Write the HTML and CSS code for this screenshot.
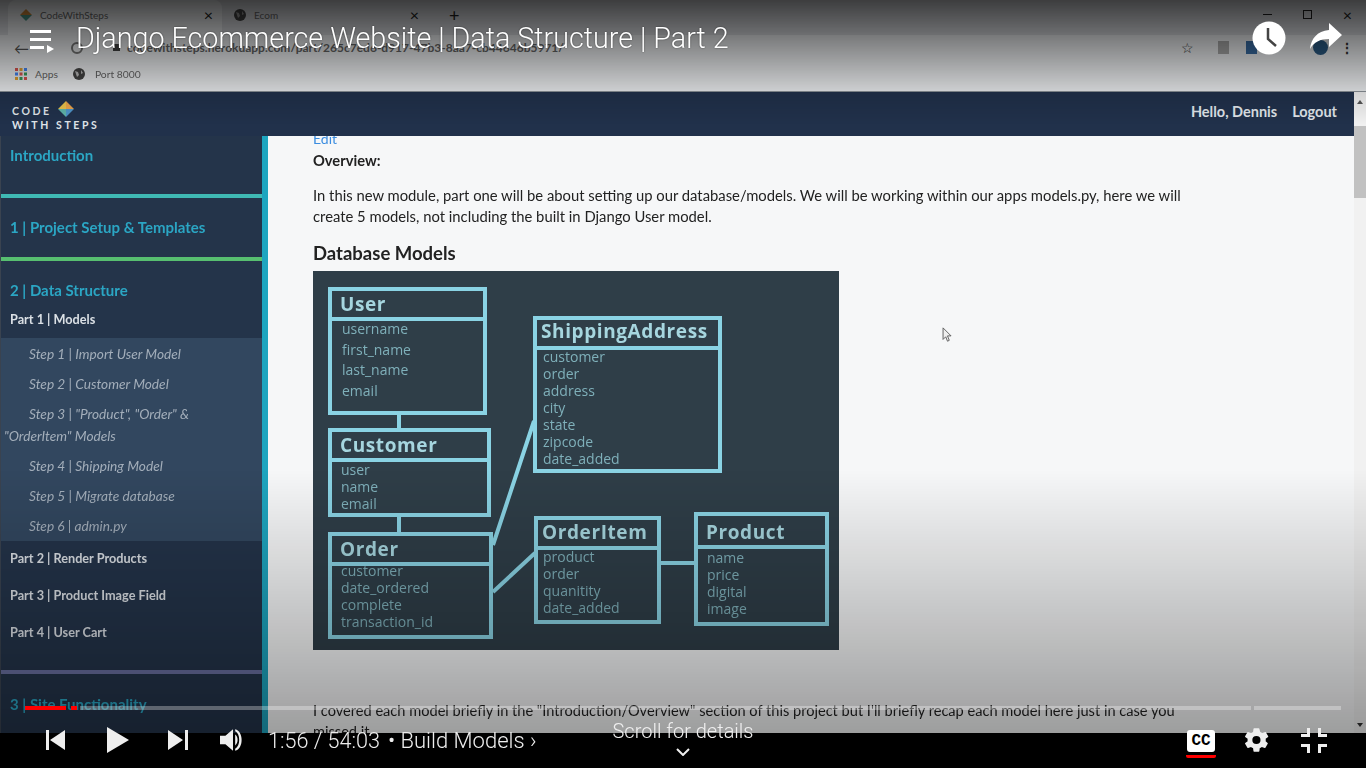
FILE: index.html
```html
<!DOCTYPE html>
<html lang="en">
<head>
	<meta charset="UTF-8">
	<title>Django Ecommerce Website | Data Structure | Part 2</title>
	<link rel="stylesheet" href="styles.css">
</head>
<body>
	<div id="player">
		<div id="frame">
			<div class="chrome">
				<div class="tabstrip">
					<div class="tab tab-active">
						<svg class="tab-icon" viewBox="0 0 12 12"><path d="M6 0L12 6H0Z" fill="#d08a3a"/><path d="M6 12L12 6H0Z" fill="#4c9a8a"/></svg>
						<span class="tab-name">CodeWithSteps</span>
						<span class="tab-x">×</span>
					</div>
					<div class="tab">
						<svg class="tab-icon" viewBox="0 0 12 12"><circle cx="6" cy="6" r="6" fill="#444"/><path d="M2 3l3 1 1 3-2 2zM8 2l2 3-2 1z" fill="#999"/></svg>
						<span class="tab-name">Ecom</span>
						<span class="tab-x">×</span>
					</div>
					<span class="tab-new">+</span>
					<div class="win-btns">
						<span class="win-min"></span>
						<span class="win-max"></span>
						<span class="win-close">×</span>
					</div>
				</div>
				<div class="toolbar">
					<span class="nav-arrow">←</span>
					<span class="nav-reload"></span>
					<span class="nav-lock"></span>
					<span class="url">codewithsteps.herokuapp.com/part/265c7ed6-d917-47b3-8aa7-cb44646b5971/</span>
					<span class="tool-star">☆</span>
					<span class="tool-ext"></span>
					<span class="tool-ext tool-blue"></span>
					<span class="tool-avatar"></span>
					<span class="tool-dots">⋮</span>
				</div>
				<div class="bookmarks">
					<svg class="apps-icon" viewBox="0 0 12 12">
						<path d="M0 0h3v3H0z" fill="#d9534f"/><path d="M4.500 0h3v3h-3z" fill="#e0a030"/><path d="M9 0h3v3H9z" fill="#4285f4"/>
						<path d="M0 4.500h3v3H0z" fill="#4285f4"/><path d="M4.500 4.500h3v3h-3z" fill="#d9534f"/><path d="M9 4.500h3v3H9z" fill="#3a9a5a"/>
						<path d="M0 9h3v3H0z" fill="#e0a030"/><path d="M4.500 9h3v3h-3z" fill="#3a9a5a"/><path d="M9 9h3v3H9z" fill="#d9534f"/>
					</svg>
					<span class="bm-text">Apps</span>
					<svg class="globe-icon" viewBox="0 0 12 12"><circle cx="6" cy="6" r="6" fill="#444"/><path d="M2 3l3 1 1 3-2 2zM8 2l2 3-2 1z" fill="#bbb"/></svg>
					<span class="bm-text">Port 8000</span>
				</div>
			</div>
			<div class="site">
				<div class="navbar">
					<div class="logo">
						<div class="logo-row">CODE
							<svg class="logo-gem" viewBox="0 0 16 16"><path d="M8 0L16 8H8Z" fill="#e9a24b"/><path d="M8 0L0 8H8Z" fill="#e9c04b"/><path d="M0 8L8 16V8Z" fill="#5fb3a8"/><path d="M16 8L8 16V8Z" fill="#4e94c8"/></svg>
						</div>
						<div>WITH STEPS</div>
					</div>
					<div class="nav-links"><span>Hello, Dennis</span><span>Logout</span></div>
				</div>
				<div class="site-body">
					<div class="sidebar">
						<div class="side-head side-intro">Introduction</div>
						<div class="side-rule rule-teal"></div>
						<div class="side-head side-one">1 | Project Setup &amp; Templates</div>
						<div class="side-rule rule-green"></div>
						<div class="side-head side-two">2 | Data Structure</div>
						<div class="side-part side-part-first">Part 1 | Models</div>
						<ul class="steps">
							<li>Step 1 | Import User Model</li>
							<li>Step 2 | Customer Model</li>
							<li>Step 3 | "Product", "Order" &amp;<br>"OrderItem" Models</li>
							<li>Step 4 | Shipping Model</li>
							<li>Step 5 | Migrate database</li>
							<li>Step 6 | admin.py</li>
						</ul>
						<div class="side-part">Part 2 | Render Products</div>
						<div class="side-part">Part 3 | Product Image Field</div>
						<div class="side-part">Part 4 | User Cart</div>
						<div class="side-rule rule-purple"></div>
						<div class="side-head side-three">3 | Site Functionality</div>
					</div>
					<div class="main">
						<a class="edit-link">Edit</a>
						<p class="overview">Overview:</p>
						<p class="intro">In this new module, part one will be about setting up our database/models. We will be working within our apps models.py, here we will create 5 models, not including the built in Django User model.</p>
						<h3 class="main-title">Database Models</h3>
						<div class="diagram">
							<svg class="links" viewBox="0 0 526 379">
								<path d="M86 144V158M86 246V263M180 274L221 150M180 321L222 282M346 292H382"/>
							</svg>
							<div class="node node-user">
								<div class="node-name">User</div>
								<div class="fields">username<br>first_name<br>last_name<br>email</div>
							</div>
							<div class="node node-customer">
								<div class="node-name">Customer</div>
								<div class="fields">user<br>name<br>email</div>
							</div>
							<div class="node node-order">
								<div class="node-name">Order</div>
								<div class="fields">customer<br>date_ordered<br>complete<br>transaction_id</div>
							</div>
							<div class="node node-shipping">
								<div class="node-name">ShippingAddress</div>
								<div class="fields">customer<br>order<br>address<br>city<br>state<br>zipcode<br>date_added</div>
							</div>
							<div class="node node-item">
								<div class="node-name">OrderItem</div>
								<div class="fields">product<br>order<br>quanitity<br>date_added</div>
							</div>
							<div class="node node-product">
								<div class="node-name">Product</div>
								<div class="fields">name<br>price<br>digital<br>image</div>
							</div>
						</div>
						<p class="recap">I covered each model briefly in the "Introduction/Overview" section of this project but I'll briefly recap each model here just in case you missed it.</p>
						<svg class="cursor" viewBox="0 0 12 18"><path d="M1 1V14L4 11L6 16L8 15L6 10H10Z" fill="#eee" stroke="#555"/></svg>
					</div>
					<div class="scrollbar">
						<span class="scroll-up"></span>
						<span class="scroll-thumb"></span>
						<span class="scroll-down"></span>
					</div>
				</div>
			</div>
		</div>

		<div id="shade-top"></div>
		<div id="shade-bottom"></div>

		<div id="topbar">
			<svg class="playlist-icon" viewBox="0 0 24 24"><path d="M0 1H21V4H0ZM0 9H21V12H0ZM0 17H14V20H0ZM17 16L24 20L17 24Z" fill="#fff"/></svg>
			<div class="video-title">Django Ecommerce Website | Data Structure | Part 2</div>
			<svg class="clock-icon" viewBox="0 0 34 34"><circle cx="17" cy="17" r="16.500" fill="#fff"/><path d="M16 7V18L24 25" fill="none" stroke="#444" stroke-width="2.500"/></svg>
			<svg class="share-icon" viewBox="0 0 32 30"><path d="M19 0L32 12L19 24V16C10 16 4 19 0 26C1 16 7 8 19 7Z" fill="#fff"/></svg>
		</div>

		<div id="progress">
			<span class="seg-played"></span>
			<span class="seg-played seg-short"></span>
			<span class="seg-rest"></span>
			<span class="seg-end"></span>
		</div>

		<div id="controls">
			<svg class="btn-prev" viewBox="0 0 20 22"><path d="M0 1H3V21H0ZM19 1V21L4 11Z" fill="#eee"/></svg>
			<svg class="btn-play" viewBox="0 0 22 26"><path d="M0 0L22 13L0 26Z" fill="#eee"/></svg>
			<svg class="btn-next" viewBox="0 0 20 22"><path d="M0 1L15 11L0 21ZM17 1H20V21H17Z" fill="#eee"/></svg>
			<svg class="btn-volume" viewBox="0 0 24 24"><path d="M0 8H5L12 2V22L5 16H0Z" fill="#eee"/><path d="M14 7C17 9 17 15 14 17ZM14 2C22 4 22 20 14 22V20C19 18 19 6 14 4Z" fill="#eee"/></svg>
			<div class="time">1:56 / 54:03</div>
			<div class="chapter">• Build Models ›</div>
			<div class="scroll-hint">
				<span>Scroll for details</span>
				<svg class="chev" viewBox="0 0 14 8"><path d="M1 1L7 7L13 1" fill="none" stroke="#eee" stroke-width="2"/></svg>
			</div>
			<div class="cc"><span class="cc-box">CC</span></div>
			<svg class="btn-gear" viewBox="0 0 24 24"><path fill-rule="evenodd" fill="#eee" d="M19.400 13c.1-.3.1-.7.1-1s0-.7-.1-1l2.100-1.600c.2-.2.2-.4.1-.6l-2-3.500c-.1-.2-.4-.3-.6-.2l-2.500 1c-.5-.4-1.100-.7-1.700-1L14 2.400C14 2.200 13.800 2 13.500 2h-4c-.2 0-.4.200-.5.400l-.4 2.700c-.6.200-1.100.6-1.700 1l-2.500-1c-.2-.1-.5 0-.6.200l-2 3.500c-.1.200-.1.500.1.600L4 11c0 .3-.1.700-.1 1s0 .7.1 1l-2.100 1.600c-.2.200-.2.400-.1.600l2 3.500c.1.200.4.300.6.200l2.500-1c.5.400 1.100.7 1.700 1l.4 2.700c0 .2.200.4.500.4h4c.2 0 .5-.2.500-.4l.4-2.700c.6-.2 1.100-.6 1.700-1l2.500 1c.2.100.5 0 .6-.2l2-3.500c.1-.2.100-.5-.1-.6ZM11.500 15.500a3.500 3.500 0 1 1 0-7 3.500 3.500 0 0 1 0 7Z"/></svg>
			<svg class="btn-exit" viewBox="0 0 26 25"><path d="M6 0H9V9H0V6H6ZM17 0H20V6H26V9H17ZM0 16H9V25H6V19H0ZM17 16H26V19H20V25H17Z" fill="#eee"/></svg>
		</div>
	</div>
</body>
</html>
```

FILE: styles.css
```css
*{
	margin: 0;
	padding: 0;
	box-sizing: border-box;
}
ul, ol{
	list-style: none;
}
body{
	background: #000;
	overflow: hidden;
}
#player{
	width: 1366px;
	height: 768px;
	position: relative;
	background: #000;
	overflow: hidden;
	font-family: "Lato", "Liberation Sans", sans-serif;
}
#frame{
	height: 733px;
	overflow: hidden;
	display: flex;
	flex-direction: column;
	filter: blur(.5px);
}

/* browser chrome */
.chrome{
	height: 92px;
	flex: none;
	background: #eef0f2;
	border-bottom: 1px solid #8d9499;
	color: #333;
}
.tabstrip{
	height: 35px;
	display: flex;
	align-items: center;
	background: #dadce0;
	padding-left: 8px;
}
.tab{
	width: 206px;
	height: 35px;
	padding: 0 9px 6px 12px;
	display: flex;
	align-items: center;
	gap: 8px;
	font-size: 10px;
	color: #666;
}
.tab-active{
	background: #eef0f2;
	border-radius: 8px 8px 0 0;
	width: 214px;
}
.tab-icon{
	width: 12px;
	height: 12px;
}
.tab-name{
	flex: 1;
}
.tab-x{
	font-size: 16px;
	color: #222;
}
.tab-new{
	margin-left: 21px;
	padding-bottom: 6px;
	font-size: 18px;
	color: #222;
}
.win-btns{
	margin-left: auto;
	display: flex;
	align-items: center;
	gap: 31px;
	padding: 0 14px 7px 0;
	color: #222;
}
.win-min{
	width: 9px;
	height: 1px;
	background: #222;
}
.win-max{
	width: 9px;
	height: 9px;
	border: 1px solid #222;
}
.win-close{
	font-size: 16px;
}
.toolbar{
	height: 25px;
	display: flex;
	align-items: center;
	padding: 0 12px 0 14px;
}
.nav-arrow{
	font-size: 15px;
	width: 57px;
	color: #555;
}
.nav-reload{
	width: 12px;
	height: 12px;
	border: 2px solid #777;
	border-radius: 50%;
}
.nav-lock{
	width: 7px;
	height: 7px;
	margin-left: 30px;
	background: #444;
}
.url{
	flex: 1;
	font-size: 12px;
	font-weight: 700;
	color: #666;
	margin-left: 7px;
}
.tool-star{
	font-size: 14px;
	margin-right: 24px;
}
.tool-ext{
	width: 11px;
	height: 13px;
	background: #aaa;
	margin-right: 17px;
}
.tool-blue{
	background: #3b6ea5;
	margin-right: 56px;
}
.tool-avatar{
	width: 15px;
	height: 15px;
	border-radius: 50%;
	background: #2c5c86;
	margin-right: 12px;
}
.tool-dots{
	font-size: 14px;
	font-weight: 700;
}
.bookmarks{
	height: 31px;
	display: flex;
	align-items: center;
	padding-left: 15px;
	padding-bottom: 4px;
	font-size: 10.300px;
	color: #666;
}
.apps-icon{
	width: 12px;
	height: 12px;
	margin-right: 8px;
}
.globe-icon{
	width: 12px;
	height: 12px;
	margin: 0 10px 0 15px;
}

/* site */
.site{
	flex: 1;
	display: flex;
	flex-direction: column;
	min-height: 0;
}
.navbar{
	height: 44px;
	flex: none;
	background: #21314b;
	color: #dfe3e8;
	display: flex;
	align-items: center;
	justify-content: space-between;
	padding: 0 17px 0 12px;
	margin-right: 12px;
	position: relative;
}
.logo{
	font-size: 10.500px;
	font-weight: 700;
	letter-spacing: 2.600px;
	line-height: 14px;
	padding-top: 8px;
}
.logo-row{
	display: flex;
	align-items: center;
	gap: 6px;
}
.logo-gem{
	width: 16px;
	height: 16px;
	margin-top: -4px;
}
.nav-links{
	display: flex;
	gap: 15px;
	font-size: 14.500px;
	font-weight: 700;
	padding-bottom: 6px;
}
.site-body{
	flex: 1;
	display: flex;
	min-height: 0;
	background: #f6f7f8;
}

/* sidebar */
.sidebar{
	width: 268px;
	flex: none;
	background: #24344a;
	border-right: 6px solid #1ea5bf;
	border-left: 1px solid #3a4350;
	overflow: hidden;
	margin-right: 45px;
}
.side-head{
	color: #2ba6c4;
	font-size: 15px;
	font-weight: 700;
	padding-left: 9px;
	line-height: 20px;
}
.side-intro{
	padding-top: 9px;
	height: 58px;
}
.side-one{
	padding-top: 19px;
	height: 59px;
}
.side-two{
	padding-top: 19px;
	height: 42px;
}
.side-three{
	padding-top: 20px;
}
.side-rule{
	height: 4px;
}
.rule-teal{
	background: #3fb9b4;
}
.rule-green{
	background: #57bf70;
}
.rule-purple{
	background: #686f9f;
	margin-top: 18px;
}
.side-part{
	color: #dbe0e5;
	font-size: 12.700px;
	font-weight: 700;
	padding-left: 9px;
	height: 37px;
	line-height: 35px;
}
.side-part-first{
	height: 32px;
	line-height: 27px;
	margin-top: 3px;
}
.steps{
	background: #32475f;
	height: 203px;
	padding-top: 1px;
	color: #a3aeba;
	font-size: 13.700px;
	font-style: italic;
	line-height: 22px;
}
.steps li{
	padding: 4px 0 4px 3px;
	text-indent: 25px;
}

/* main content */
.main{
	width: 1041px;
	flex: none;
	color: #222;
	font-size: 14.700px;
	position: relative;
	overflow: hidden;
}
.edit-link{
	display: block;
	color: #3b8de0;
	font-size: 14px;
	line-height: 14px;
	margin-top: -4px;
}
.overview{
	font-weight: 700;
	line-height: 18px;
	margin-top: 5px;
}
.intro{
	width: 880px;
	font-size: 14.800px;
	line-height: 21px;
	margin-top: 16px;
}
.main-title{
	font-size: 18.500px;
	line-height: 22px;
	margin-top: 15px;
}
.diagram{
	width: 526px;
	height: 379px;
	margin-top: 7px;
	background: #2f3e48;
	position: relative;
}
.links{
	position: absolute;
	left: 0;
	top: 0;
	width: 526px;
	height: 379px;
}
.links path{
	fill: none;
	stroke: #8ad3e4;
	stroke-width: 4;
}
.node{
	position: absolute;
	border: 4px solid #8ad3e4;
	color: #7fb0ba;
}
.node-name{
	border-bottom: 4px solid #8ad3e4;
	color: #a6d6df;
	font-family: "Open Sans", sans-serif;
	font-weight: 700;
	letter-spacing: .6px;
	font-size: 19px;
	line-height: 26px;
	padding-left: 8px;
}
.fields{
	font-family: "Open Sans", sans-serif;
	font-size: 14px;
	line-height: 17px;
	padding-left: 9px;
}
.node-user{
	left: 15px;
	top: 16px;
	width: 159px;
	height: 128px;
}
.node-user .fields{
	line-height: 20.500px;
	margin-top: -2px;
	padding-left: 10px;
}
.node-customer{
	left: 15px;
	top: 157px;
	width: 163px;
	height: 89px;
}
.node-customer .fields{
	margin-top: -1px;
}
.node-order{
	left: 15px;
	top: 261px;
	width: 165px;
	height: 107px;
}
.node-order .fields{
	margin-top: -4px;
}
.node-shipping{
	left: 220px;
	top: 45px;
	width: 189px;
	height: 157px;
}
.node-shipping .node-name{
	line-height: 22px;
	padding: 0 0 4px 4px;
}
.node-shipping .fields{
	margin-top: -2px;
	padding-left: 6px;
}
.node-item{
	left: 221px;
	top: 245px;
	width: 127px;
	height: 108px;
}
.node-item .node-name{
	line-height: 24px;
	padding: 0 0 2px 4px;
}
.node-item .fields{
	margin-top: -2px;
	padding-left: 5px;
}
.node-product{
	left: 381px;
	top: 241px;
	width: 135px;
	height: 114px;
}
.node-product .node-name{
	line-height: 25px;
	padding-top: 4px;
}
.recap{
	width: 880px;
	font-size: 14.600px;
	line-height: 21px;
	margin-top: 50px;
}
.cursor{
	position: absolute;
	left: 629px;
	top: 191px;
	width: 11px;
	height: 16px;
}
.scrollbar{
	width: 12px;
	flex: none;
	margin-top: -44px;
	background: #f1f1f1;
	display: flex;
	flex-direction: column;
	position: relative;
}
.scroll-up{
	height: 34px;
}
.scroll-thumb{
	height: 72px;
	background: #c1c1c1;
}
.scroll-up::after{
	content: "";
	display: block;
	margin: 5px auto 0;
	width: 0;
	border: 3px solid transparent;
	border-bottom: 4px solid #555;
}
.scroll-down{
	position: absolute;
	bottom: 3px;
	left: 3px;
	border: 3px solid transparent;
	border-top: 4px solid #333;
}

/* youtube overlay */
#shade-top{
	position: absolute;
	left: 0;
	top: 0;
	width: 100%;
	height: 125px;
	background: linear-gradient(rgba(0,0,0,.72), rgba(0,0,0,.12) 75%, rgba(0,0,0,0));
}
#shade-bottom{
	position: absolute;
	left: 0;
	top: 470px;
	width: 100%;
	height: 263px;
	background: linear-gradient(rgba(0,0,0,0), rgba(0,0,0,.36));
}
#topbar{
	position: absolute;
	left: 30px;
	top: 21px;
	right: 24px;
	display: flex;
	align-items: center;
	color: #fff;
}
.playlist-icon{
	width: 24px;
	height: 24px;
	margin-top: 6px;
}
.video-title{
	flex: 1;
	margin-left: 22px;
	font-family: "Roboto", sans-serif;
	font-weight: 300;
	font-size: 28.700px;
	line-height: 32px;
	text-shadow: 0 0 2px rgba(0,0,0,.5);
}
.clock-icon{
	width: 34px;
	height: 34px;
	margin-right: 24px;
}
.share-icon{
	width: 32px;
	height: 30px;
}
#progress{
	position: absolute;
	left: 25px;
	top: 706px;
	width: 1316px;
	height: 4px;
	display: flex;
	gap: 3px;
}
#progress span{
	display: block;
	height: 4px;
}
.seg-played{
	width: 41px;
	background: #f00;
}
#progress .seg-short{
	width: 6px;
	margin-left: 2px;
}
.seg-rest{
	flex: 1;
	background: rgba(255,255,255,.3);
}
.seg-end{
	width: 87px;
	background: rgba(255,255,255,.3);
}
#controls{
	position: absolute;
	left: 0;
	right: 0;
	bottom: 0;
	height: 56px;
	color: #eee;
	display: flex;
	align-items: center;
	font-family: "Roboto", sans-serif;
	font-weight: 300;
	font-size: 21.600px;
}
.btn-prev{
	width: 20px;
	height: 22px;
	margin-left: 46px;
}
.btn-play{
	width: 22px;
	height: 26px;
	margin-left: 41px;
}
.btn-next{
	width: 20px;
	height: 22px;
	margin-left: 39px;
}
.btn-volume{
	width: 26px;
	height: 26px;
	margin-left: 32px;
}
.time{
	margin-left: 22px;
}
.chapter{
	margin-left: 8px;
	font-size: 22px;
}
.scroll-hint{
	position: absolute;
	left: 583px;
	width: 200px;
	top: 7px;
	text-align: center;
	font-size: 20px;
	line-height: 24px;
}
.chev{
	display: block;
	width: 14px;
	height: 8px;
	margin: 5px auto 0;
}
.cc{
	position: absolute;
	left: 1186px;
	top: 18px;
	width: 30px;
	height: 28px;
	border-bottom: 3px solid #f00;
	border-radius: 0 0 2px 2px;
}
.cc-box{
	display: block;
	width: 28px;
	height: 22px;
	margin: 0 auto;
	background: #fff;
	border-radius: 3px;
	color: #000;
	font-family: "Liberation Mono", monospace;
	font-weight: 700;
	font-size: 16px;
	line-height: 22px;
	text-align: center;
}
.btn-gear{
	position: absolute;
	left: 1243px;
	top: 14px;
	width: 28px;
	height: 28px;
}
.btn-exit{
	position: absolute;
	left: 1301px;
	top: 16px;
	width: 26px;
	height: 25px;
}
```
